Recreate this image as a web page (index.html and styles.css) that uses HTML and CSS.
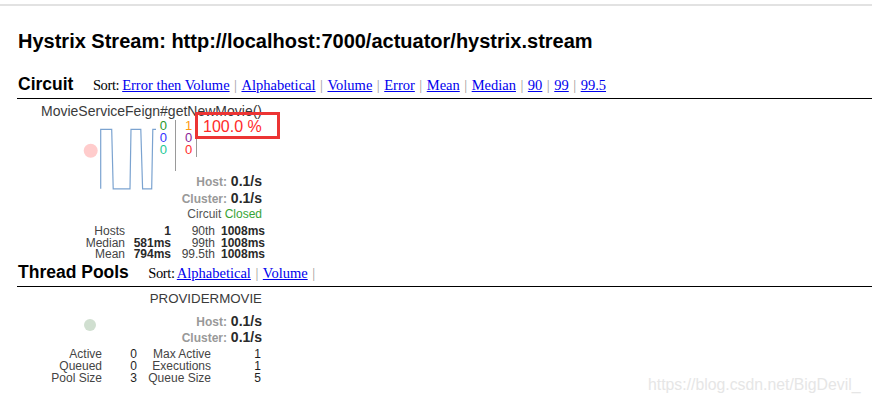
FILE: index.html
```html
<!DOCTYPE html>
<html>
<head>
<meta charset="utf-8">
<title>Hystrix Monitor</title>
<link rel="stylesheet" href="styles.css">
</head>
<body>
<div class="topbar"></div>
<h1 class="page-title">Hystrix Stream: http://localhost:7000/actuator/hystrix.stream</h1>

<div class="section-head">
  <h2 class="section-title">Circuit</h2>
  <span class="sort sort-circuit"><span class="sort-label">Sort:</span> <a href="#">Error then Volume</a><span class="sep">|</span><a href="#">Alphabetical</a><span class="sep">|</span><a href="#">Volume</a><span class="sep">|</span><a href="#">Error</a><span class="sep">|</span><a href="#">Mean</a><span class="sep">|</span><a href="#">Median</a><span class="sep">|</span><a href="#">90</a><span class="sep">|</span><a href="#">99</a><span class="sep">|</span><a href="#">99.5</a></span>
</div>

<div class="monitor circuit">
  <div class="name">MovieServiceFeign#getNewMovie()</div>
  <div class="monitor-body">
    <svg class="chart" width="80" height="72" viewBox="0 0 80 72">
      <circle cx="10.7" cy="30.7" r="7" fill="#ffcccc"/>
      <polyline points="20.7,68.8 20.7,9.3 31.7,9.3 33.2,68.8 50,68.8 51,9.3 60.8,9.3 62.6,68.8 71.7,68.8 72.8,9.3 76,9.3" fill="none" stroke="#5a8cc4" stroke-opacity="0.8" stroke-width="1.2"/>
    </svg>
    <div class="data">
      <div class="counters">
        <div class="count-col col-a">
          <span class="c-success">0</span>
          <span class="c-short">0</span>
          <span class="c-bad">0</span>
        </div>
        <div class="count-col col-b">
          <span class="c-timeout">1</span>
          <span class="c-rejected">0</span>
          <span class="c-failure">0</span>
        </div>
        <div class="error-pct">100.0 %</div>
      </div>
      <div class="rate"><span class="rate-label">Host:</span> 0.1/s</div>
      <div class="rate"><span class="rate-label">Cluster:</span> 0.1/s</div>
      <div class="status">Circuit <span class="closed">Closed</span></div>
    </div>
  </div>
  <div class="stats stats-circuit">
    <span class="lbl">Hosts</span><span class="val">1</span><span class="lbl">90th</span><span class="val">1008ms</span>
    <span class="lbl">Median</span><span class="val">581ms</span><span class="lbl">99th</span><span class="val">1008ms</span>
    <span class="lbl">Mean</span><span class="val">794ms</span><span class="lbl">99.5th</span><span class="val">1008ms</span>
  </div>
</div>

<div class="section-head pools-head">
  <h2 class="section-title">Thread Pools</h2>
  <span class="sort"><span class="sort-label">Sort:</span> <a href="#">Alphabetical</a><span class="sep">|</span><a href="#">Volume</a><span class="sep">|</span></span>
</div>

<div class="monitor pool">
  <div class="name pool-name">PROVIDERMOVIE</div>
  <div class="monitor-body">
    <div class="pool-dot"></div>
    <div class="data pool-data">
      <div class="rate"><span class="rate-label">Host:</span> 0.1/s</div>
      <div class="rate"><span class="rate-label">Cluster:</span> 0.1/s</div>
    </div>
  </div>
  <div class="stats stats-pool">
    <span class="lbl">Active</span><span class="val">0</span><span class="lbl">Max Active</span><span class="val">1</span>
    <span class="lbl">Queued</span><span class="val">0</span><span class="lbl">Executions</span><span class="val">1</span>
    <span class="lbl">Pool Size</span><span class="val">3</span><span class="lbl">Queue Size</span><span class="val">5</span>
  </div>
</div>

<div class="watermark">https://blog.csdn.net/BigDevil_</div>
</body>
</html>
```
FILE: styles.css
```css
html, body {
  margin: 0;
  padding: 0;
  background: #ffffff;
}
body {
  font-family: "Liberation Sans", Arial, sans-serif;
  color: #000;
  position: relative;
  width: 872px;
  height: 403px;
  overflow: hidden;
}
.topbar {
  margin-top: 4px;
  height: 2px;
  background: #e2e2e2;
}
.page-title {
  margin: 24px 0 0 18px;
  font-size: 20px;
  line-height: 23px;
  font-weight: bold;
}
.section-head {
  display: flex;
  align-items: baseline;
  margin: 21px 0 0 17px;
  padding: 0 0 4px 1px;
  border-bottom: 1px solid #000;
}
.section-title {
  margin: 0;
  font-size: 17.5px;
  line-height: 20px;
  font-weight: bold;
}
.sort {
  margin-left: 19.5px;
  font-family: "Liberation Serif", "Times New Roman", serif;
  font-size: 14.5px;
}
.sort-label {
  letter-spacing: -0.4px;
  margin-right: -0.6px;
}
.sort a {
  color: #0000ee;
  text-decoration: underline;
}
.sep {
  color: #9a9a9a;
  margin: 0 4.5px;
}
.pools-head {
  margin-top: 1px;
}
.monitor {
  margin-left: 17px;
  width: 248px;
}
.name {
  margin-top: 4px;
  width: 245px;
  text-align: right;
  font-size: 14px;
  line-height: 16px;
  color: #3a3a3a;
}
.pool-name {
  font-size: 13.3px;
}
.monitor-body {
  display: flex;
  align-items: flex-start;
}
.chart {
  display: block;
  margin: 1px 0 0 63px;
  flex: none;
}
.data {
  width: 102px;
  display: flex;
  flex-direction: column;
  align-items: flex-end;
}
.counters {
  display: flex;
  align-items: flex-start;
  align-self: flex-start;
  margin-top: 1px;
  font-size: 13px;
  line-height: 12.2px;
}
.count-col {
  display: flex;
  flex-direction: column;
  border-right: 1px solid #9a9a9a;
}
.col-a {
  height: 51px;
  padding-right: 8px;
  width: 7px;
  align-items: flex-end;
}
.col-b {
  height: 37px;
  padding-left: 9px;
  width: 11px;
  align-items: flex-start;
}
.c-success { color: #2a982a; }
.c-short { color: #3434ff; }
.c-bad { color: #1cc896; }
.c-timeout { color: #ff9a10; }
.c-rejected { color: #8a2598; }
.c-failure { color: #ff2e2e; }
.error-pct {
  margin: -8px 0 0 -2px;
  border: 3px solid #ec3434;
  padding: 3px 15px 0 5px;
  font-size: 16px;
  line-height: 18.4px;
  color: #ff2a2a;
  white-space: nowrap;
}
.rate {
  font-size: 14px;
  line-height: 16.5px;
  font-weight: bold;
  color: #2a2a2a;
  white-space: nowrap;
}
.counters + .rate {
  margin-top: 2px;
}
.rate-label {
  font-size: 12px;
  line-height: 0;
  color: #999;
}
.status {
  font-size: 12px;
  line-height: 16.5px;
  color: #555;
}
.closed {
  color: #36a436;
}
.stats {
  display: grid;
  margin-top: 3.5px;
  font-size: 12px;
  line-height: 11.7px;
  text-align: right;
  white-space: nowrap;
}
.stats-circuit {
  grid-template-columns: 108px 46px 44px 50px;
}
.stats-pool {
  grid-template-columns: 85px 35px 74px 50px;
  margin-top: 3.8px;
}
.lbl {
  color: #444;
}
.val {
  color: #2a2a2a;
  font-weight: bold;
}
.stats-pool .val {
  font-weight: normal;
  color: #1e1e1e;
}
.pool-dot {
  flex: none;
  width: 12px;
  height: 12px;
  border-radius: 50%;
  background: #d0dfd0;
  margin: 12px 0 0 67px;
}
.pool-data {
  margin-top: 5.5px;
  margin-left: auto;
  margin-right: 3px;
}
.watermark {
  position: absolute;
  left: 648px;
  top: 376px;
  font-size: 15.8px;
  line-height: 18px;
  color: #e6e6e6;
  white-space: nowrap;
}
```
